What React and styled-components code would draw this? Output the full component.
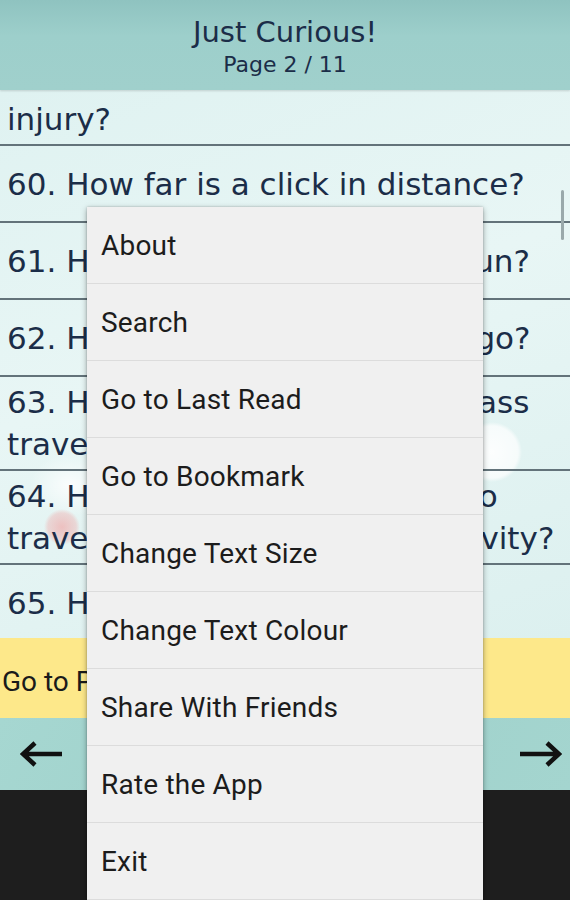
import React from "react";
import styled, { createGlobalStyle } from "styled-components";

const GlobalStyle = createGlobalStyle`
  * { box-sizing: border-box; }
  html, body { margin: 0; padding: 0; background: #1e1e1e; }
`;

const Screen = styled.div`
  position: relative;
  width: 570px;
  height: 900px;
  display: flex;
  flex-direction: column;
  overflow: hidden;
  font-family: "DejaVu Sans", sans-serif;
`;

const Header = styled.header`
  height: 90px;
  flex-shrink: 0;
  display: flex;
  flex-direction: column;
  align-items: center;
  padding-top: 14px;
  background: linear-gradient(180deg, #8fc3c0 0%, #9dcfcb 40%, #a0d0cc 100%);
  color: #1b2d48;
  box-shadow: 0 1px 2px rgba(0, 0, 0, 0.15);
  z-index: 1;
`;

const Title = styled.h1`
  margin: 0;
  font-size: 29px;
  font-weight: normal;
  line-height: 36px;
`;

const PageNo = styled.div`
  font-size: 22px;
  line-height: 30px;
`;

const ListArea = styled.main`
  position: relative;
  height: 548px;
  flex-shrink: 0;
  overflow: hidden;
  background:
    radial-gradient(circle at 492px 362px, rgba(255, 255, 255, 0.9) 0, rgba(255, 255, 255, 0.7) 26px, rgba(255, 255, 255, 0) 30px),
    radial-gradient(circle at 62px 437px, rgba(240, 170, 170, 0.7) 0, rgba(240, 170, 170, 0.4) 14px, rgba(240, 170, 170, 0) 18px),
    radial-gradient(ellipse at 70px 395px, rgba(255, 255, 255, 0.8) 0, rgba(255, 255, 255, 0) 40px),
    linear-gradient(160deg, #dff2f1 0%, #e8f6f5 45%, #dcf0ef 100%);
`;

const QuestionList = styled.ol`
  list-style: none;
  margin: -38px 0 0;
  padding: 0;
`;

const Question = styled.li`
  min-height: ${(p) => (p.$tall ? 94 : 77)}px;
  display: flex;
  align-items: center;
  padding: 2px 0 2px 7px;
  border-bottom: 2px solid ${(p) => (p.$last ? "transparent" : "#63737a")};
  color: #1b2d48;
  font-size: 31px;
  line-height: 42px;
`;

const ScrollThumb = styled.div`
  position: absolute;
  right: 6px;
  top: 100px;
  width: 3px;
  height: 50px;
  background: #9aa9ab;
  border-radius: 2px;
`;

const GotoBar = styled.div`
  height: 80px;
  flex-shrink: 0;
  display: flex;
  align-items: center;
  padding: 6px 2px 0;
  background: #fde88a;
  font-family: Roboto, "Liberation Sans", sans-serif;
  font-size: 28px;
  color: #1a1a1a;
`;

const NavBar = styled.nav`
  height: 72px;
  flex-shrink: 0;
  display: flex;
  align-items: center;
  justify-content: space-between;
  padding: 0 8px 0 20px;
  background: linear-gradient(120deg, #a6d7d1 0%, #9fd1cb 50%, #a4d5cf 100%);
`;

const Arrow = styled.svg`
  width: 44px;
  height: 26px;
`;

const SystemArea = styled.div`
  flex: 1;
  background: #1e1e1e;
`;

const Menu = styled.ul`
  position: absolute;
  left: 87px;
  top: 207px;
  width: 396px;
  margin: 0;
  padding: 0;
  list-style: none;
  background: #f0f0f0;
  box-shadow: 0 2px 6px rgba(0, 0, 0, 0.35), 0 0 2px rgba(0, 0, 0, 0.2);
  z-index: 2;
`;

const MenuItem = styled.li`
  height: 77px;
  display: flex;
  align-items: center;
  padding-left: 14px;
  border-bottom: 1px solid #dcdcdc;
  font-family: Roboto, "Liberation Sans", sans-serif;
  font-size: 28px;
  letter-spacing: 0.2px;
  color: #1c1c1c;
`;

const questions = [
  { text: "59. How far can a cat fall without injury?", tall: true },
  { text: "60. How far is a click in distance?" },
  { text: "61. How far is Mars from the sun?" },
  { text: "62. How low can a submarine go?" },
  { text: "63. How fast do bodies with mass travel?", tall: true },
  { text: "64. How fast would you have to travel to overcome Earth's gravity?", tall: true },
  { text: "65. How hot is the Sun's core?", last: true },
];

const menuItems = [
  "About",
  "Search",
  "Go to Last Read",
  "Go to Bookmark",
  "Change Text Size",
  "Change Text Colour",
  "Share With Friends",
  "Rate the App",
  "Exit",
];

const ArrowIcon = ({ flip }) => (
  <Arrow viewBox="0 0 44 26" style={flip ? { transform: "scaleX(-1)" } : undefined}>
    <path d="M42 13H5M15 2L3 13l12 11" fill="none" stroke="#111" strokeWidth="4.5" />
  </Arrow>
);

export default function App() {
  return (
    <Screen>
      <GlobalStyle />
      <Header>
        <Title>Just Curious!</Title>
        <PageNo>Page 2 / 11</PageNo>
      </Header>
      <ListArea>
        <QuestionList>
          {questions.map((q, i) => (
            <Question key={i} $tall={q.tall} $last={q.last}>
              {q.text}
            </Question>
          ))}
        </QuestionList>
        <ScrollThumb />
      </ListArea>
      <GotoBar>Go to Page</GotoBar>
      <NavBar>
        <ArrowIcon />
        <ArrowIcon flip />
      </NavBar>
      <SystemArea />
      <Menu>
        {menuItems.map((m) => (
          <MenuItem key={m}>{m}</MenuItem>
        ))}
      </Menu>
    </Screen>
  );
}
